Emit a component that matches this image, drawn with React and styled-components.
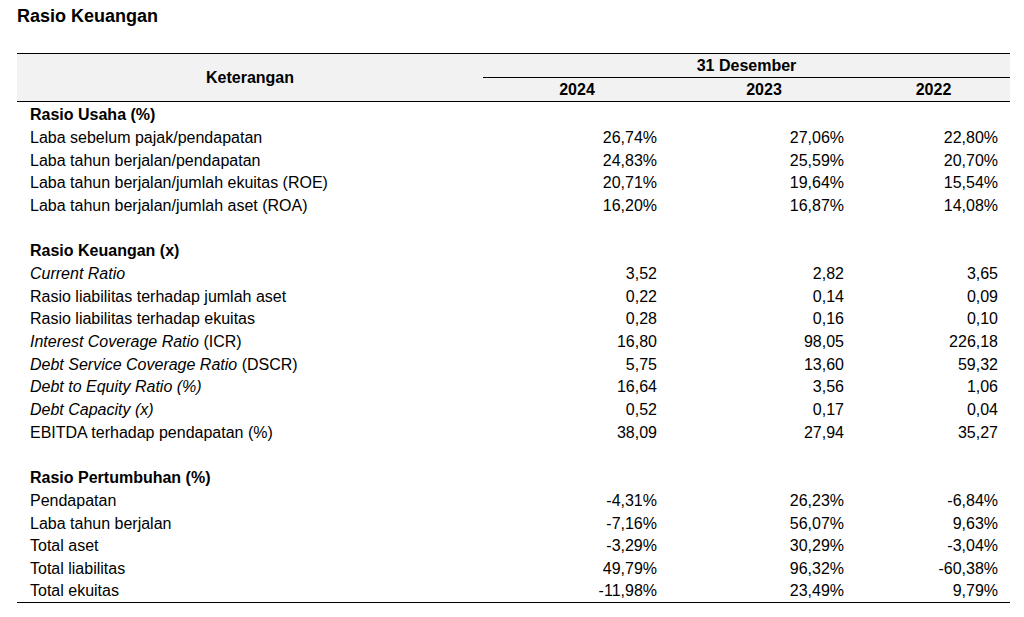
import React from 'react';
import styled, { createGlobalStyle } from 'styled-components';

const GlobalStyle = createGlobalStyle`
    body {
        margin: 0;
        background: #ffffff;
        color: #000000;
        font-family: "Liberation Sans", Arial, sans-serif;
    }
`;

const Page = styled.div`
    width: 1024px;
    height: 617px;
    padding: 5px 14px 0 17px;
    box-sizing: border-box;
    overflow: hidden;
`;

const Title = styled.h1`
    margin: 0 0 26px;
    font-size: 18px;
    line-height: 22px;
    font-weight: bold;
`;

const Table = styled.table`
    width: 993px;
    border-collapse: collapse;
    table-layout: fixed;
    font-size: 16px;
    border-top: 1.5px solid #000;
    border-bottom: 1.5px solid #000;
`;

const Head = styled.thead`
    background: #f2f2f2;
    border-bottom: 1.5px solid #000;
`;

const HeadCell = styled.th`
    font-weight: bold;
    text-align: center;
    padding: 0;
    height: 23px;
    line-height: 16px;
    vertical-align: middle;
    border-bottom: ${p => p.$line ? '1.5px solid #000' : 'none'};
`;

const Row = styled.tr`
    height: ${p => p.$first ? 24.7 : 22.7}px;
`;

const Label = styled.td`
    padding: 0 0 0 13px;
    line-height: 22px;
    vertical-align: bottom;
    font-weight: ${p => p.$section ? 'bold' : 'normal'};
    white-space: nowrap;
`;

const Value = styled.td`
    text-align: right;
    padding: 0 ${p => p.$pad}px 0 0;
    line-height: 22px;
    vertical-align: bottom;
    white-space: nowrap;
`;

const sections = [
    {
        title: 'Rasio Usaha (%)',
        rows: [
            ['Laba sebelum pajak/pendapatan', '26,74%', '27,06%', '22,80%'],
            ['Laba tahun berjalan/pendapatan', '24,83%', '25,59%', '20,70%'],
            ['Laba tahun berjalan/jumlah ekuitas (ROE)', '20,71%', '19,64%', '15,54%'],
            ['Laba tahun berjalan/jumlah aset (ROA)', '16,20%', '16,87%', '14,08%'],
        ],
    },
    {
        title: 'Rasio Keuangan (x)',
        rows: [
            [<i>Current Ratio</i>, '3,52', '2,82', '3,65'],
            ['Rasio liabilitas terhadap jumlah aset', '0,22', '0,14', '0,09'],
            ['Rasio liabilitas terhadap ekuitas', '0,28', '0,16', '0,10'],
            [<><i>Interest Coverage Ratio</i> (ICR)</>, '16,80', '98,05', '226,18'],
            [<><i>Debt Service Coverage Ratio</i> (DSCR)</>, '5,75', '13,60', '59,32'],
            [<i>Debt to Equity Ratio (%)</i>, '16,64', '3,56', '1,06'],
            [<i>Debt Capacity (x)</i>, '0,52', '0,17', '0,04'],
            ['EBITDA terhadap pendapatan (%)', '38,09', '27,94', '35,27'],
        ],
    },
    {
        title: 'Rasio Pertumbuhan (%)',
        rows: [
            ['Pendapatan', '-4,31%', '26,23%', '-6,84%'],
            ['Laba tahun berjalan', '-7,16%', '56,07%', '9,63%'],
            ['Total aset', '-3,29%', '30,29%', '-3,04%'],
            ['Total liabilitas', '49,79%', '96,32%', '-60,38%'],
            ['Total ekuitas', '-11,98%', '23,49%', '9,79%'],
        ],
    },
];

const pads = [14, 13, 12];

const App = () => {
    return (
        <>
            <GlobalStyle />
            <Page>
                <Title>Rasio Keuangan</Title>
                <Table>
                    <colgroup>
                        <col style={ { width: 466 } } />
                        <col style={ { width: 188 } } />
                        <col style={ { width: 186 } } />
                        <col style={ { width: 153 } } />
                    </colgroup>
                    <Head>
                        <tr>
                            <HeadCell rowSpan={ 2 }>Keterangan</HeadCell>
                            <HeadCell colSpan={ 3 } $line>31 Desember</HeadCell>
                        </tr>
                        <tr>
                            <HeadCell>2024</HeadCell>
                            <HeadCell>2023</HeadCell>
                            <HeadCell>2022</HeadCell>
                        </tr>
                    </Head>
                    <tbody>
                        {
                            sections.map( ( section, i ) => (
                                <React.Fragment key={ section.title }>
                                    { i > 0 && <Row><td colSpan={ 4 } /></Row> }
                                    <Row $first={ i === 0 }>
                                        <Label $section colSpan={ 4 }>{ section.title }</Label>
                                    </Row>
                                    {
                                        section.rows.map( ( row, j ) => (
                                            <Row key={ j }>
                                                <Label>{ row[0] }</Label>
                                                { row.slice( 1 ).map( ( v, k ) => <Value key={ k } $pad={ pads[k] }>{ v }</Value> ) }
                                            </Row>
                                        ) )
                                    }
                                </React.Fragment>
                            ) )
                        }
                    </tbody>
                </Table>
            </Page>
        </>
    )
}

export default App
